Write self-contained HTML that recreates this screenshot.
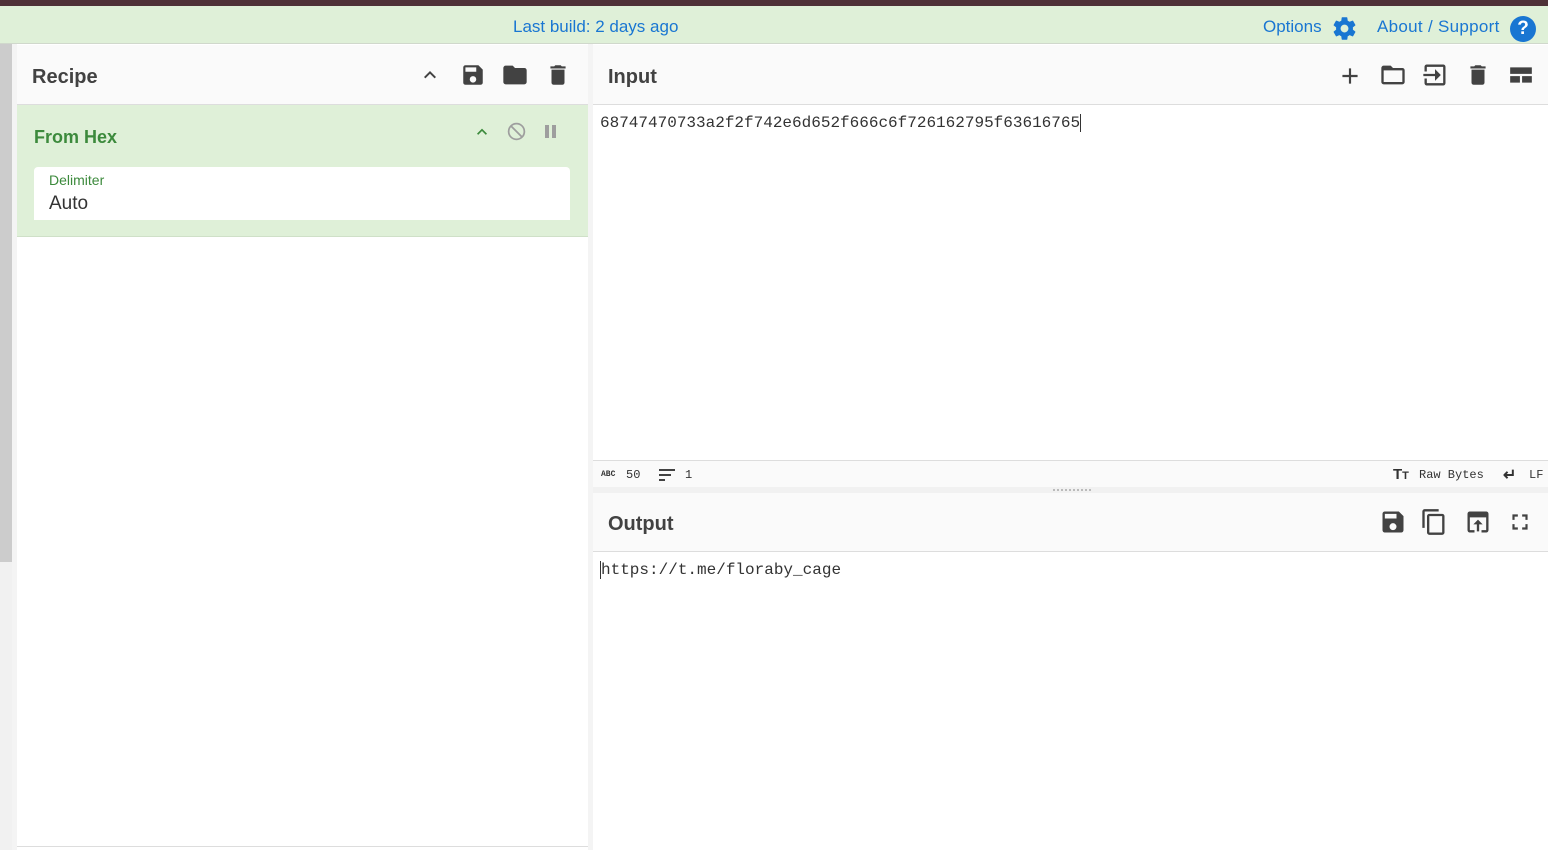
<!DOCTYPE html><html><head><style>
*{margin:0;padding:0;box-sizing:border-box}
body{width:1548px;height:850px;overflow:hidden;font-family:"Liberation Sans",sans-serif;background:#fff;position:relative}
.a{position:absolute}
.ic{position:absolute;fill:#424242}
.mono{font-family:"Liberation Mono",monospace}
</style></head><body>
<div class="a" style="left:0;top:0;width:1548px;height:6px;background:#4e3137"></div>
<div class="a" style="left:0;top:6px;width:1548px;height:38px;background:#dff0d8;border-bottom:1px solid #d0d8cc"></div>
<div class="a" style="left:513px;top:17px;color:#1976d2;font-size:17px">Last build: 2 days ago</div>
<div class="a" style="left:1263px;top:17px;color:#1976d2;font-size:17px">Options</div>
<svg class="a" style="left:1331px;top:15px" width="27" height="27" viewBox="0 0 24 24"><path fill="#1976d2" d="M12 15.5A3.5 3.5 0 1 1 12 8.5a3.5 3.5 0 0 1 0 7zm7.43-2.530c.04-.32.07-.64.07-.97s-.03-.66-.07-1l2.11-1.630c.19-.15.24-.42.12-.64l-2-3.46c-.12-.22-.39-.31-.61-.22l-2.49 1c-.52-.39-1.060-.73-1.69-.98l-.37-2.65A.5.5 0 0 0 14 2h-4c-.25 0-.46.18-.5.42l-.37 2.65c-.63.25-1.17.59-1.69.98l-2.49-1c-.22-.09-.49 0-.61.22l-2 3.46c-.13.22-.07.49.12.64L4.57 11c-.04.34-.07.67-.07 1s.03.65.07.97l-2.11 1.66c-.19.15-.25.42-.12.64l2 3.46c.12.22.39.3.61.22l2.49-1.01c.52.4 1.06.74 1.69.99l.37 2.65c.04.24.25.42.5.42h4c.25 0 .46-.18.5-.42l.37-2.65c.63-.26 1.17-.59 1.69-.99l2.49 1.01c.22.08.49 0 .61-.22l2-3.46c.12-.22.07-.49-.12-.64l-2.11-1.66z"/></svg>
<div class="a" style="left:1377px;top:17px;color:#1976d2;font-size:17px;letter-spacing:0.3px">About / Support</div>
<div class="a" style="left:1510px;top:16px;width:26px;height:26px;border-radius:50%;background:#1976d2;color:#fff;font-weight:bold;font-size:19px;text-align:center;line-height:26px">?</div>

<div class="a" style="left:0;top:44px;width:12px;height:518px;background:#ccc"></div>
<div class="a" style="left:0;top:562px;width:12px;height:288px;background:#f1f1f1"></div>
<div class="a" style="left:12px;top:44px;width:5px;height:806px;background:#f4f4f4"></div>

<div class="a" style="left:17px;top:45px;width:571px;height:60px;background:#fafafa;border-bottom:1px solid #ddd"></div>
<div class="a" style="left:32px;top:66px;font-size:20px;font-weight:bold;color:#424242">Recipe</div>
<svg class="ic" style="left:418px;top:63px" width="24" height="24" viewBox="0 0 24 24"><path d="M7.4 15.4 12 10.8l4.6 4.6L18 14l-6-6-6 6z"/></svg>
<svg class="ic" style="left:460px;top:62px" width="26" height="26" viewBox="0 0 24 24"><path d="M17 3H5a2 2 0 0 0-2 2v14a2 2 0 0 0 2 2h14a2 2 0 0 0 2-2V7zm-5 16a3 3 0 1 1 0-6 3 3 0 0 1 0 6zm3-10H5V5h10z"/></svg>
<svg class="ic" style="left:501px;top:61px" width="28" height="28" viewBox="0 0 24 24"><path d="M10 4H4a2 2 0 0 0-2 2v12a2 2 0 0 0 2 2h16a2 2 0 0 0 2-2V8a2 2 0 0 0-2-2h-8z"/></svg>
<svg class="ic" style="left:545px;top:61px" width="26" height="28" viewBox="0 0 24 24"><path d="M6 19a2 2 0 0 0 2 2h8a2 2 0 0 0 2-2V7H6zM19 4h-3.5l-1-1h-5l-1 1H5v2h14z"/></svg>

<div class="a" style="left:17px;top:105px;width:571px;height:132px;background:#dff0d8;border-bottom:1px solid #cfe0c8"></div>
<div class="a" style="left:34px;top:127px;font-size:18px;font-weight:bold;color:#3c8a3c">From Hex</div>
<svg class="a" style="left:472px;top:122px" width="20" height="20" viewBox="0 0 24 24"><path fill="#3c8a3c" d="M7.4 15.4 12 10.8l4.6 4.6L18 14l-6-6-6 6z"/></svg>
<svg class="a" style="left:506px;top:121px" width="21" height="21" viewBox="0 0 24 24"><circle cx="12" cy="12" r="9" fill="none" stroke="#9e9e9e" stroke-width="2"/><path d="M6 6l12 12" stroke="#9e9e9e" stroke-width="2"/></svg>
<div class="a" style="left:545px;top:125px;width:4px;height:13px;background:#9e9e9e"></div>
<div class="a" style="left:552px;top:125px;width:4px;height:13px;background:#9e9e9e"></div>
<div class="a" style="left:34px;top:167px;width:536px;height:53px;background:#fff;border-radius:4px 4px 0 0"></div>
<div class="a" style="left:49px;top:172px;font-size:14px;color:#3c8a3c">Delimiter</div>
<div class="a" style="left:49px;top:193px;font-size:19px;color:#333">Auto</div>
<div class="a" style="left:17px;top:846px;width:571px;height:1px;background:#ddd"></div>

<div class="a" style="left:588px;top:44px;width:5px;height:806px;background:#f4f4f4"></div>

<div class="a" style="left:593px;top:45px;width:955px;height:60px;background:#fafafa;border-bottom:1px solid #ddd"></div>
<div class="a" style="left:608px;top:66px;font-size:20px;font-weight:bold;color:#424242">Input</div>
<svg class="ic" style="left:1337px;top:63px" width="26" height="26" viewBox="0 0 24 24"><path d="M19 13h-6v6h-2v-6H5v-2h6V5h2v6h6z"/></svg>
<svg class="ic" style="left:1379px;top:61px" width="28" height="28" viewBox="0 0 24 24"><path d="M20 6h-8l-2-2H4a2 2 0 0 0-2 2v12a2 2 0 0 0 2 2h16a2 2 0 0 0 2-2V8a2 2 0 0 0-2-2zm0 12H4V8h16z"/></svg>
<svg class="ic" style="left:1420px;top:61px" width="30" height="28" viewBox="0 0 24 24"><path d="M3 5v4h2V5h14v14H5v-4H3v4a2 2 0 0 0 2 2h14a2 2 0 0 0 2-2V5a2 2 0 0 0-2-2H5a2 2 0 0 0-2 2zm9 12 5-5-5-5v4H2v2h10z"/></svg>
<svg class="ic" style="left:1465px;top:61px" width="26" height="28" viewBox="0 0 24 24"><path d="M6 19a2 2 0 0 0 2 2h8a2 2 0 0 0 2-2V7H6zM19 4h-3.5l-1-1h-5l-1 1H5v2h14z"/></svg>
<svg class="ic" style="left:1507px;top:62px" width="28" height="26" viewBox="0 0 24 24"><path d="M2 5h20v6H2zM2 13h9v6H2zM13 13h9v6h-9z"/></svg>
<div class="a mono" style="left:600px;top:114px;font-size:16px;color:#333">68747470733a2f2f742e6d652f666c6f726162795f63616765<span style="border-left:1px solid #333"></span></div>

<div class="a" style="left:593px;top:460px;width:955px;height:27px;background:#fafafa;border-top:1px solid #ddd"></div>
<div class="a mono" style="left:601px;top:470px;font-size:8px;font-weight:bold;color:#333">ABC</div>
<div class="a mono" style="left:626px;top:468px;font-size:12px;color:#333">50</div>
<svg class="ic" style="left:659px;top:468px" width="18" height="14" viewBox="0 0 18 14"><path d="M0 1h16v2H0zM0 6h12v2H0zM0 11h6v2H0z"/></svg>
<div class="a mono" style="left:685px;top:468px;font-size:12px;color:#333">1</div>
<div class="a" style="left:1393px;top:466px;font-size:15px;font-weight:bold;color:#333">T<span style="font-size:11px">T</span></div>
<div class="a mono" style="left:1419px;top:468px;font-size:12px;color:#333">Raw Bytes</div>
<div class="a" style="left:1503px;top:465px;font-size:16px;color:#333;font-weight:bold">↵</div>
<div class="a mono" style="left:1529px;top:468px;font-size:12px;color:#333">LF</div>
<div class="a" style="left:593px;top:487px;width:955px;height:6px;background:#f1f1f1"></div>
<div class="a" style="left:1053px;top:489px;width:38px;height:2px;border-top:2px dotted #bbb"></div>

<div class="a" style="left:593px;top:493px;width:955px;height:59px;background:#fafafa;border-bottom:1px solid #ddd"></div>
<div class="a" style="left:608px;top:513px;font-size:20px;font-weight:bold;color:#424242">Output</div>
<svg class="ic" style="left:1379px;top:508px" width="28" height="28" viewBox="0 0 24 24"><path d="M17 3H5a2 2 0 0 0-2 2v14a2 2 0 0 0 2 2h14a2 2 0 0 0 2-2V7zm-5 16a3 3 0 1 1 0-6 3 3 0 0 1 0 6zm3-10H5V5h10z"/></svg>
<svg class="ic" style="left:1420px;top:507px" width="28" height="30" viewBox="0 0 24 24"><path d="M16 1H4a2 2 0 0 0-2 2v14h2V3h12zm3 4H8a2 2 0 0 0-2 2v14a2 2 0 0 0 2 2h11a2 2 0 0 0 2-2V7a2 2 0 0 0-2-2zm0 16H8V7h11z"/></svg>
<svg class="ic" style="left:1464px;top:508px" width="28" height="28" viewBox="0 0 24 24"><path d="M19 3H5a2 2 0 0 0-2 2v14a2 2 0 0 0 2 2h4v-2H5V8h14v11h-4v2h4a2 2 0 0 0 2-2V5a2 2 0 0 0-2-2zm-7 7-4 4h3v6h2v-6h3z"/></svg>
<svg class="ic" style="left:1507px;top:509px" width="26" height="26" viewBox="0 0 24 24"><path d="M7 14H5v5h5v-2H7zm-2-4h2V7h3V5H5zm12 7h-3v2h5v-5h-2zM14 5v2h3v3h2V5z"/></svg>
<div class="a mono" style="left:600px;top:561px;font-size:16px;color:#333"><span style="border-left:1px solid #333"></span>https://t.me/floraby_cage</div>
</body></html>
